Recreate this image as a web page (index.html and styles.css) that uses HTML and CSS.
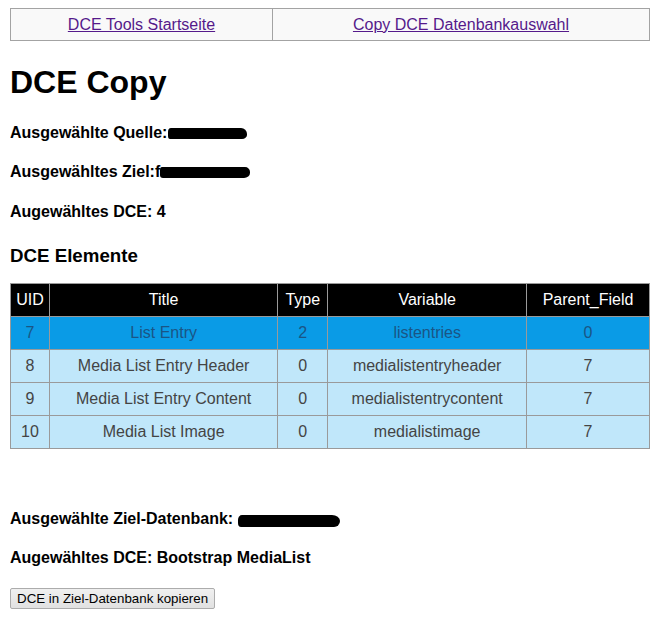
FILE: index.html
```html
<!DOCTYPE html>
<html lang="de">
<head>
<meta charset="utf-8">
<title>DCE Copy</title>
<link rel="stylesheet" href="styles.css">
</head>
<body>
<nav class="topnav">
  <div class="navcell navcell-first"><a href="#">DCE Tools Startseite</a></div>
  <div class="navcell"><a href="#">Copy DCE Datenbankauswahl</a></div>
</nav>

<h1 class="title">DCE Copy</h1>

<h4 class="info">Ausgewählte Quelle:<span class="redact redact-src"></span></h4>
<h4 class="info">Ausgewähltes Ziel:f<span class="redact redact-dst"></span></h4>
<h4 class="info">Augewähltes DCE: 4</h4>

<h3 class="subtitle">DCE Elemente</h3>

<table class="elements">
  <colgroup>
    <col class="c-uid"><col class="c-title"><col class="c-type"><col class="c-var"><col class="c-parent">
  </colgroup>
  <thead>
    <tr><th>UID</th><th>Title</th><th>Type</th><th>Variable</th><th>Parent_Field</th></tr>
  </thead>
  <tbody>
    <tr class="row-main"><td>7</td><td>List Entry</td><td>2</td><td>listentries</td><td>0</td></tr>
    <tr><td>8</td><td>Media List Entry Header</td><td>0</td><td>medialistentryheader</td><td>7</td></tr>
    <tr><td>9</td><td>Media List Entry Content</td><td>0</td><td>medialistentrycontent</td><td>7</td></tr>
    <tr><td>10</td><td>Media List Image</td><td>0</td><td>medialistimage</td><td>7</td></tr>
  </tbody>
</table>

<section class="target">
  <h4 class="info">Ausgewählte Ziel-Datenbank: <span class="redact redact-db"></span></h4>
  <h4 class="info">Augewähltes DCE: Bootstrap MediaList</h4>
  <form class="copyform"><button type="button" class="btn">DCE in Ziel-Datenbank kopieren</button></form>
</section>
</body>
</html>
```

FILE: styles.css
```css
html, body {
  background: #ffffff;
}
body {
  margin: 8px 19px 8px 10px;
  font-family: "Liberation Sans", Arial, sans-serif;
  color: #000;
}

.topnav {
  display: grid;
  grid-template-columns: 262px 1fr;
  border: 1px solid #a3a3a3;
  background: #f9f9f9;
}
.navcell {
  text-align: center;
  font-size: 16px;
  line-height: 19px;
  padding: 6px 4px;
}
.navcell-first {
  border-right: 1px solid #a3a3a3;
}
.navcell a {
  color: #551a8b;
  text-decoration: underline;
}

.title {
  font-size: 32px;
  font-weight: bold;
  margin: 23px 0 23px;
}

.info {
  font-size: 16px;
  font-weight: bold;
  margin: 21.3px 0;
}

.redact {
  display: inline-block;
  background: #000;
  vertical-align: -1px;
}
.redact-src {
  width: 79px;
  height: 11px;
  border-radius: 3px 6px 5px 2px / 4px 6px 4px 3px;
  margin-left: 1px;
}
.redact-dst {
  width: 90px;
  height: 11px;
  border-radius: 2px 5px 6px 3px / 3px 5px 5px 3px;
}
.redact-db {
  width: 102px;
  height: 12px;
  vertical-align: -3px;
  border-radius: 4px 8px 6px 3px / 5px 6px 6px 4px;
}

.subtitle {
  font-size: 18.72px;
  font-weight: bold;
  margin: 24px 0 16px;
}

.elements {
  border-collapse: collapse;
  width: 640px;
  font-size: 16px;
}
.c-uid { width: 39px; }
.c-title { width: 229px; }
.c-type { width: 50px; }
.c-var { width: 199px; }
.c-parent { width: 123px; }

.elements th,
.elements td {
  border: 1px solid #9a9a9a;
  padding: 7px 2px;
  line-height: 18px;
  text-align: center;
}
.elements th {
  background: #000;
  color: #fff;
  font-weight: normal;
}
.elements td {
  background: #c0e7fa;
  color: #444;
}
.elements .row-main td {
  background: #0a9be6;
  color: #1a5585;
}

.target {
  margin-top: 61px;
}
.copyform {
  margin: 0;
}
.btn {
  font-family: "Liberation Sans", Arial, sans-serif;
  font-size: 13.33px;
  height: 21px;
  padding: 1px 6px;
  border: 1px solid #acacac;
  border-radius: 2px;
  background: linear-gradient(#f0f0f0, #e1e1e1);
  color: #000;
}
```
